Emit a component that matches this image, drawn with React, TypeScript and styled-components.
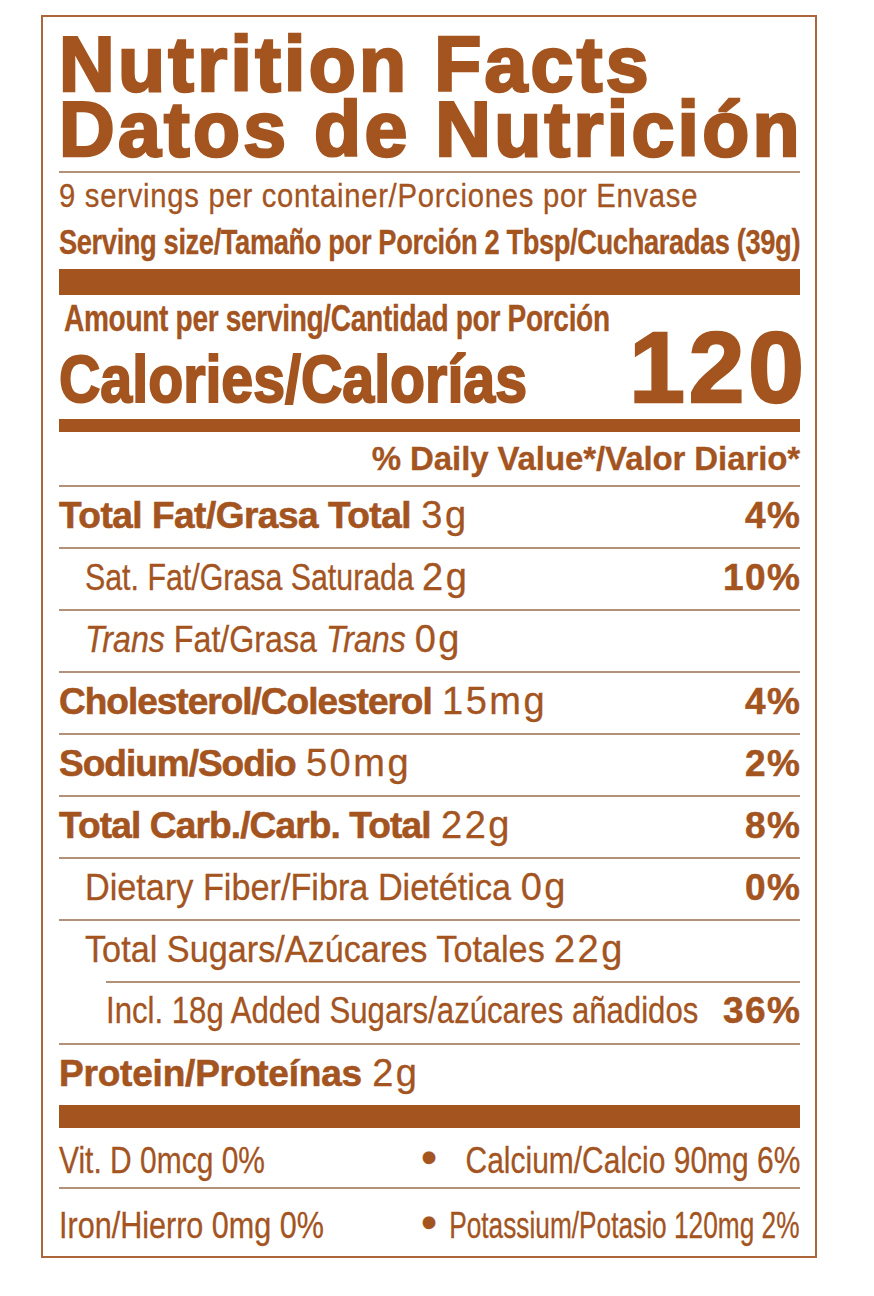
import React from 'react';
import styled, { createGlobalStyle } from 'styled-components';

const INK = '#a3541f';
const EDGE = '#ad663a';
const RULE = '#b39079';
const SANS = '"Liberation Sans", Arial, Helvetica, sans-serif';

const GlobalStyle = createGlobalStyle`
  html, body { margin: 0; padding: 0; background: #ffffff; }
  body { font-family: ${SANS}; color: ${INK}; }
`;

const Label = styled.section`
  box-sizing: border-box;
  width: 776px;
  margin: 15px 0 0 41px;
  border: 2px solid ${EDGE};
  padding: 0 15px 0 16px;
  overflow: hidden;
  color: ${INK};
  font-family: ${SANS};
  -webkit-text-stroke: 0.3px ${INK};
`;

/* Condensed type: the label face is a condensed grotesque, drawn here by
   narrowing Liberation Sans horizontally. */
const Condensed = styled.span<{ $k: number; $origin?: 'left' | 'right'; $ls?: number }>`
  display: inline-block;
  white-space: nowrap;
  letter-spacing: ${(p) => p.$ls ?? 0}px;
  transform-origin: ${(p) => p.$origin ?? 'left'} center;
  transform: ${(p) => (p.$k === 1 ? 'none' : `scaleX(${p.$k})`)};
`;

const Title = styled.h1`
  margin: 0;
  padding-top: 15px;
  font-weight: 700;
  font-size: 77px;
  line-height: 65px;
  letter-spacing: 3.3px;
  -webkit-text-stroke: 2.6px ${INK};
  white-space: nowrap;
`;

const ThinRule = styled.div<{ $mt?: number }>`
  height: 2px;
  margin-top: ${(p) => p.$mt ?? 0}px;
  background: ${RULE};
`;

const Bar = styled.div<{ $h: number; $mt?: number }>`
  height: ${(p) => p.$h}px;
  margin-top: ${(p) => p.$mt ?? 0}px;
  background: ${INK};
`;

const ServingsLine = styled.div`
  margin-top: 2px;
  font-size: 34px;
  line-height: 40px;
  white-space: nowrap;
`;

const ServingSize = styled.div`
  margin-top: 7px;
  font-weight: 700;
  font-size: 35px;
  line-height: 40px;
  white-space: nowrap;
`;

const CalorieBlock = styled.div`
  display: flex;
  justify-content: space-between;
  align-items: flex-end;
  padding-top: 4px;
`;

const CalorieText = styled.div`
  display: flex;
  flex-direction: column;
  flex: 1 1 auto;
  min-width: 0;
`;

const AmountPer = styled.div`
  padding-left: 5px;
  font-weight: 700;
  font-size: 36px;
  line-height: 40px;
  white-space: nowrap;
`;

const Calories = styled.div`
  margin-top: 5px;
  font-weight: 700;
  font-size: 67px;
  line-height: 70px;
  -webkit-text-stroke: 2px ${INK};
  white-space: nowrap;
`;

const CalorieValue = styled.div`
  flex: 0 0 auto;
  margin-right: -8px;
  font-weight: 700;
  font-size: 100px;
  line-height: 93px;
  letter-spacing: 4px;
  -webkit-text-stroke: 2.4px ${INK};
`;

const DVHeader = styled.div`
  padding-top: 1px;
  height: 52px;
  text-align: right;
  font-weight: 700;
  font-size: 33px;
  line-height: 52px;
  letter-spacing: -0.1px;
  white-space: nowrap;
`;

const NutrientRow = styled.div<{ $inset?: number }>`
  display: flex;
  justify-content: space-between;
  align-items: baseline;
  height: 60px;
  margin-left: ${(p) => p.$inset ?? 0}px;
  border-top: 2px solid ${RULE};
  font-size: 37px;
  line-height: 56px;
  white-space: nowrap;
`;

const NameCell = styled.div<{ $indent?: number }>`
  flex: 1 1 auto;
  min-width: 0;
  padding-left: ${(p) => p.$indent ?? 0}px;
`;

const StrongName = styled.span<{ $ls: number }>`
  font-weight: 700;
  letter-spacing: ${(p) => p.$ls}px;
  -webkit-text-stroke: 0.6px ${INK};
`;

const Italic = styled.i`
  font-style: italic;
`;

const Quantity = styled.span<{ $k: number }>`
  display: inline-block;
  font-size: 38px;
  letter-spacing: 2.5px;
  transform-origin: left center;
  transform: ${(p) => (p.$k === 1 ? 'none' : `scaleX(${1 / p.$k})`)};
`;

const DailyValue = styled.span`
  flex: 0 0 auto;
  margin-right: -1.5px;
  font-weight: 700;
  letter-spacing: 1.5px;
  -webkit-text-stroke: 0.5px ${INK};
`;

const MineralRow = styled.div<{ $h: number; $rule?: boolean }>`
  display: grid;
  grid-template-columns: 362px auto minmax(0, 1fr);
  align-items: baseline;
  height: ${(p) => p.$h}px;
  border-top: ${(p) => (p.$rule ? `2px solid ${RULE}` : 'none')};
  font-size: 37px;
  line-height: ${(p) => p.$h}px;
  white-space: nowrap;
`;

const Bullet = styled.span`
  font-size: 46px;
`;

const MineralRight = styled.div`
  justify-self: end;
  white-space: nowrap;
`;

type Nutrient = {
  name: React.ReactNode;
  amount?: string;
  dv?: string;
  bold?: boolean;
  indent?: number;
  inset?: number;
  k: number;
  ls?: number;
};

const nutrients: Nutrient[] = [
  { name: 'Total Fat/Grasa Total', amount: '3g', dv: '4%', bold: true, k: 1, ls: -0.5 },
  { name: 'Sat. Fat/Grasa Saturada', amount: '2g', dv: '10%', indent: 26, k: 0.82 },
  {
    name: (
      <>
        <Italic>Trans</Italic> Fat/Grasa <Italic>Trans</Italic>
      </>
    ),
    amount: '0g',
    indent: 26,
    k: 0.87,
  },
  { name: 'Cholesterol/Colesterol', amount: '15mg', dv: '4%', bold: true, k: 1, ls: -1 },
  { name: 'Sodium/Sodio', amount: '50mg', dv: '2%', bold: true, k: 1, ls: -1 },
  { name: 'Total Carb./Carb. Total', amount: '22g', dv: '8%', bold: true, k: 1, ls: -0.85 },
  { name: 'Dietary Fiber/Fibra Dietética', amount: '0g', dv: '0%', indent: 26, k: 0.925 },
  { name: 'Total Sugars/Azúcares Totales', amount: '22g', indent: 26, k: 0.925 },
  { name: 'Incl. 18g Added Sugars/azúcares añadidos', dv: '36%', inset: 47, k: 0.842 },
  { name: 'Protein/Proteínas', amount: '2g', bold: true, k: 1, ls: -0.2 },
];

type Mineral = { left: string; right: string; kl: number; kr: number; h: number; rule?: boolean };

const minerals: Mineral[] = [
  { left: 'Vit. D 0mcg 0%', right: 'Calcium/Calcio 90mg 6%', kl: 0.81, kr: 0.81, h: 59 },
  { left: 'Iron/Hierro 0mg 0%', right: 'Potassium/Potasio 120mg 2%', kl: 0.826, kr: 0.71, h: 67, rule: true },
];

export default function App() {
  return (
    <>
      <GlobalStyle />
      <Label>
        <Title>
          Nutrition Facts
          <br />
          Datos de Nutrición
        </Title>
        <ThinRule $mt={9} />
        <ServingsLine>
          <Condensed $k={0.86} $ls={0.85}>
            9 servings per container/Porciones por Envase
          </Condensed>
        </ServingsLine>
        <ServingSize>
          <Condensed $k={0.78} $ls={-0.5}>
            Serving size/Tamaño por Porción 2 Tbsp/Cucharadas (39g)
          </Condensed>
        </ServingSize>
        <Bar $h={26} $mt={7} />
        <CalorieBlock>
          <CalorieText>
            <AmountPer>
              <Condensed $k={0.78} $ls={-0.42}>
                Amount per serving/Cantidad por Porción
              </Condensed>
            </AmountPer>
            <Calories>
              <Condensed $k={0.855}>Calories/Calorías</Condensed>
            </Calories>
          </CalorieText>
          <CalorieValue>120</CalorieValue>
        </CalorieBlock>
        <Bar $h={13} $mt={5} />
        <DVHeader>% Daily Value*/Valor Diario*</DVHeader>
        {nutrients.map((n, i) => (
          <NutrientRow key={i} $inset={n.inset}>
            <NameCell $indent={n.indent}>
              <Condensed $k={n.k}>
                {n.bold ? <StrongName $ls={n.ls ?? -1}>{n.name}</StrongName> : n.name}
                {n.amount ? (
                  <>
                    {' '}
                    <Quantity $k={n.k}>{n.amount}</Quantity>
                  </>
                ) : null}
              </Condensed>
            </NameCell>
            {n.dv ? <DailyValue>{n.dv}</DailyValue> : null}
          </NutrientRow>
        ))}
        <Bar $h={23} />
        {minerals.map((m, i) => (
          <MineralRow key={i} $h={m.h} $rule={m.rule}>
            <Condensed $k={m.kl}>{m.left}</Condensed>
            <Bullet>•</Bullet>
            <MineralRight>
              <Condensed $k={m.kr} $origin="right">
                {m.right}
              </Condensed>
            </MineralRight>
          </MineralRow>
        ))}
      </Label>
    </>
  );
}
